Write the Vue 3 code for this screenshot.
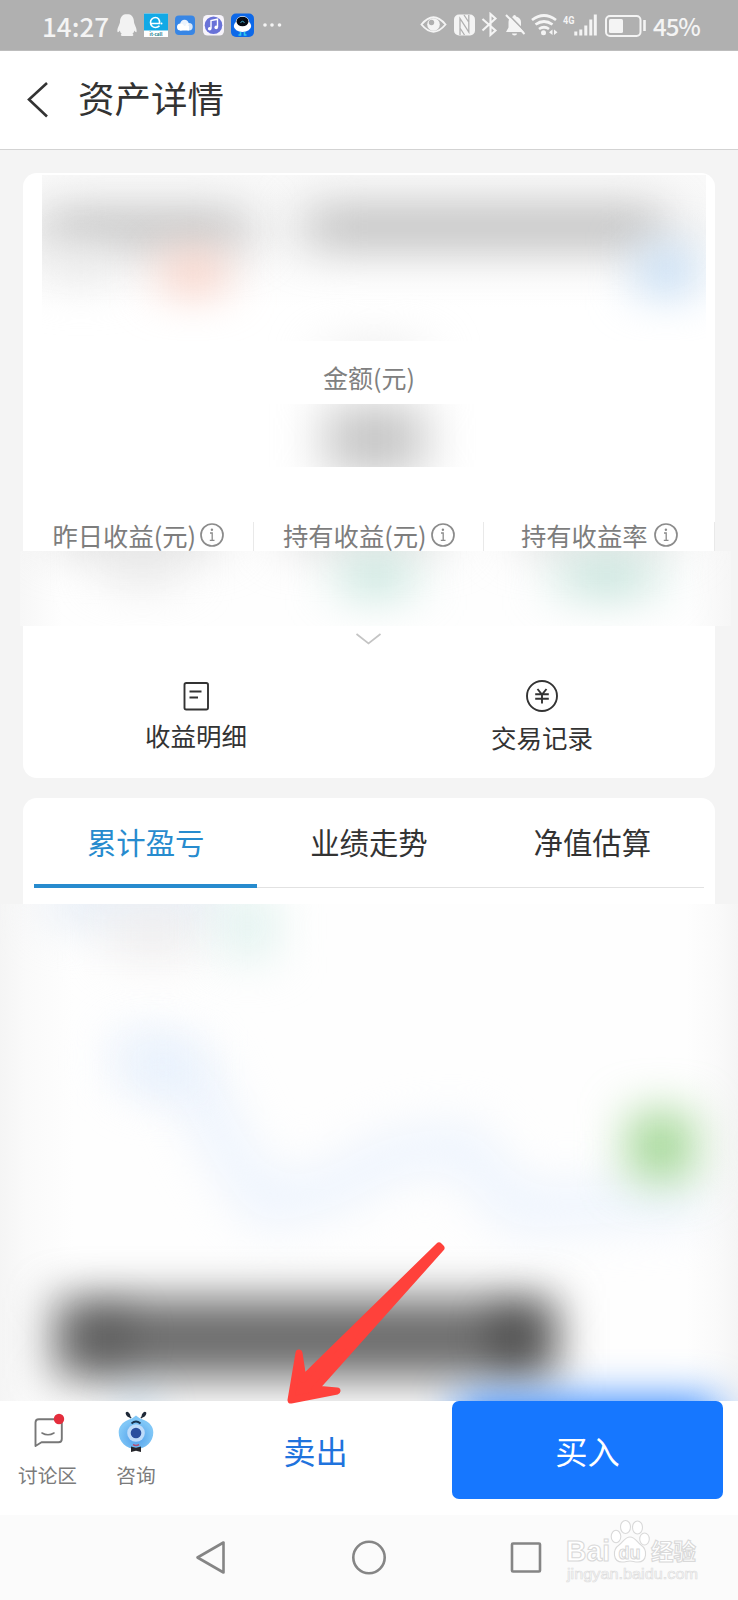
<script setup>
const stats = [
  { label: '昨日收益(元)', cls: 's1' },
  { label: '持有收益(元)', cls: 's2' },
  { label: '持有收益率', cls: 's3' },
]
const tabs = ['累计盈亏', '业绩走势', '净值估算']
</script>

<template>
  <div class="phone">
    <header class="status">
      <span class="time">14:27</span>
      <svg class="apps" width="168" height="26" viewBox="116 12 168 26">
        <path d="M127 14c-4.500 0-7 3.500-7 8 0 2-3 6-2.600 9.500.2 1.200 1.400.6 2.400-1 .4 1.500 1 2.500 2 3.300-1.200.5-1.600 2 .2 2.200h10.400c1.500-.2 1.200-1.700 0-2.200 1-.8 1.600-1.800 2-3.300 1 1.600 2 2.200 2.200 1 .4-3.500-2.600-7.500-2.600-9.500 0-4.500-2.500-8-7-8z" fill="#f2f2f2" />
        <rect x="144" y="13.500" width="24" height="23.500" fill="#fff" />
        <rect x="144" y="13.500" width="24" height="17" fill="#12a9e6" />
        <path d="M151 23.500h8.500c.5-4-1.500-6-4-6-3 0-5 2.500-5 5s2 5 5 5c1.500 0 3-.6 4-1.700" fill="none" stroke="#fff" stroke-width="1.600" />
        <circle cx="161.500" cy="23.500" r="1" fill="#fff" />
        <text x="149.500" y="35.500" font-size="5" font-weight="700" textLength="13" lengthAdjust="spacingAndGlyphs" fill="#18808e">it-call</text>
        <rect x="175" y="15.500" width="20" height="19.500" rx="4" fill="#3886e5" />
        <g fill="#fff"><circle cx="180.500" cy="27" r="3.500" /><circle cx="184.500" cy="24" r="4.300" opacity=".9" /><circle cx="189" cy="26.700" r="3.700" opacity=".8" /><rect x="180" y="26" width="9" height="4.500" /></g>
        <rect x="203" y="15" width="21" height="20.500" rx="4.500" fill="#f7f4fb" />
        <circle cx="213.500" cy="25.200" r="8.800" fill="#6972d8" />
        <path d="M211 28.500v-8l6.500-1.300v8" fill="none" stroke="#fff" stroke-width="1.400" />
        <circle cx="209.700" cy="28.700" r="1.800" fill="#fff" /><circle cx="216.200" cy="27.400" r="1.800" fill="#fff" />
        <rect x="231" y="13.500" width="23" height="23.500" rx="5" fill="#0d68e8" />
        <ellipse cx="242.500" cy="26" rx="8.700" ry="6" fill="#fff" /><circle cx="242.500" cy="23" r="7" fill="#fff" />
        <ellipse cx="242.500" cy="21.500" rx="6" ry="4.800" fill="#050b15" />
        <path d="M240.500 22.500q2-2.500 4 0" fill="none" stroke="#4bd" stroke-width="1" />
        <path d="M240.500 32v3h-2M244.500 32v3h2" fill="none" stroke="#31cce8" stroke-width="1.600" />
        <g fill="#f4f4f4"><circle cx="265" cy="25" r="1.800" /><circle cx="272" cy="25" r="1.800" /><circle cx="279.500" cy="25" r="1.800" /></g>
      </svg>
      <svg class="signals" width="228" height="26" viewBox="419 12 228 26" fill="none" stroke="#f4f4f4">
        <path d="M421.500 24.500q12-14.500 24 0q-12 14.500-24 0z" stroke-width="1.900" />
        <circle cx="433.500" cy="24.500" r="6.300" fill="#f4f4f4" stroke="none" />
        <circle cx="431.500" cy="22.500" r="2.700" fill="#b0b0b0" stroke="none" />
        <rect x="454" y="14.500" width="21" height="21" rx="5" fill="#f4f4f4" stroke="none" />
        <path d="M460 35V18.500l8.800 13.500V15M464 15l5 7.500M460 28l4.500 7" stroke="#b0b0b0" stroke-width="1.300" />
        <path d="M482.500 19l13 11.500-5 4.500V14l5 4.500-13 12" stroke-width="2.100" />
        <path d="M506 32h18l-3-4v-6c0-3-2-5-5-5.600a1.500 1.500 0 00-3 0c-3 .6-4.500 3-4.500 6v5z" fill="#f4f4f4" stroke="none" />
        <path d="M512 33.500h5a2.500 2 0 01-5 0z" fill="#f4f4f4" stroke="none" />
        <path d="M508 14l18 18.500" stroke="#b0b0b0" stroke-width="1.600" /><path d="M506 15l18.500 19" stroke-width="2" />
        <path d="M532 20q12-9 24 0M535.500 24.500q8.500-6 17 0M539 29q5-3.500 10 0" stroke-width="2.700" />
        <circle cx="543.500" cy="32.800" r="2.500" fill="#f4f4f4" stroke="none" />
        <path d="M552.500 29.500v5.500l-3.500-2.700zM554 29.500v5.500l3.500-2.700z" fill="#f4f4f4" stroke="none" />
        <text class="net" x="563" y="23.500" textLength="11.500" lengthAdjust="spacingAndGlyphs" fill="#f4f4f4" stroke="none">4G</text>
        <path d="M575.800 35.500v-4M580.800 35.500v-6M585.800 35.500v-10M590.800 35.500v-16M595.300 35.500v-21" stroke-width="3" />
        <rect x="606" y="16" width="34.500" height="20" rx="4" stroke-width="2" />
        <rect x="609" y="19" width="14" height="14" rx="1.500" fill="#f4f4f4" stroke="none" /><path d="M644.500 20v11" stroke-width="2.600" />
      </svg>
      <span class="percent">45%</span>
    </header>

    <nav class="title-bar">
      <svg width="22" height="38" viewBox="0 0 22 38"><path d="M20 2L2 18.500L20 35.500" fill="none" stroke="#333" stroke-width="2.600" /></svg>
      <h1>资产详情</h1>
    </nav>

    <main>
      <section class="card summary">
        <svg class="fund-mask" width="664" height="166" viewBox="42 175 664 166">
          <defs>
            <filter id="b18" x="-60%" y="-200%" width="220%" height="500%" color-interpolation-filters="sRGB"><feGaussianBlur stdDeviation="25 21" /></filter>
            <filter id="b14" x="-150%" y="-250%" width="400%" height="600%" color-interpolation-filters="sRGB"><feGaussianBlur stdDeviation="24 22" /></filter>
            <linearGradient id="fade" x1="0" y1="0" x2="0" y2="1"><stop offset="0" stop-color="#f9f9f9" /><stop offset=".35" stop-color="#f7f7f7" /><stop offset=".8" stop-color="#fff" /></linearGradient>
          </defs>
          <rect x="42" y="175" width="664" height="166" fill="url(#fade)" />
          <rect x="46" y="208" width="200" height="42" fill="#c6c6c6" filter="url(#b18)" />
          <rect x="308" y="204" width="354" height="46" fill="#c4c4c4" filter="url(#b18)" />
          <rect x="46" y="250" width="70" height="34" fill="#ececec" filter="url(#b14)" />
          <rect x="162" y="252" width="62" height="42" fill="#f9cfc3" filter="url(#b14)" />
          <rect x="638" y="246" width="56" height="50" fill="#c3dcf4" filter="url(#b14)" />
          <ellipse cx="374" cy="354" rx="60" ry="10" fill="#e2e2e2" filter="url(#b14)" />
        </svg>
        <div class="amount-label">金额(元)</div>
        <svg class="amount-mask" width="208" height="63" viewBox="268 404 208 63">
          <rect x="326" y="404" width="98" height="70" fill="#c6c6c6" filter="url(#b14)" />
        </svg>
        <div class="stats">
          <div v-for="s in stats" :key="s.label" class="stat" :class="s.cls">
            <span>{{ s.label }}</span>
            <svg width="24" height="24" viewBox="0 0 24 24" fill="none" stroke="#8b8b8b"><circle cx="12" cy="12" r="11" stroke-width="1.700" /><path d="M10 10h2.200v7M9.800 17.300h4.700" stroke-width="1.300" /><circle cx="11.900" cy="6.800" r="1.200" fill="#8b8b8b" stroke="none" /></svg>
          </div>
        </div>
        <svg class="stats-mask" width="711" height="75" viewBox="20 551 711 75">
          <defs>
            <linearGradient id="side" x1="0" x2="1"><stop offset="0" stop-color="#f7f7f7" /><stop offset=".06" stop-color="#fefefe" /><stop offset=".94" stop-color="#fefefe" /><stop offset="1" stop-color="#f6f6f6" /></linearGradient>
            <filter id="wide" x="-150%" y="-250%" width="400%" height="600%" color-interpolation-filters="sRGB"><feGaussianBlur stdDeviation="27 22" /></filter>
          </defs>
          <rect x="20" y="551" width="711" height="75" fill="url(#side)" />
          <rect x="55" y="520" width="165" height="32" fill="#d8d8d8" filter="url(#wide)" />
          <rect x="285" y="520" width="160" height="30" fill="#d8d8d8" filter="url(#wide)" />
          <rect x="520" y="520" width="155" height="30" fill="#d8d8d8" filter="url(#wide)" />
          <rect x="110" y="555" width="65" height="28" fill="#e2e2e2" filter="url(#wide)" />
          <rect x="345" y="556" width="62" height="40" fill="#bde2d8" filter="url(#wide)" />
          <rect x="562" y="556" width="90" height="40" fill="#c1e2d9" filter="url(#wide)" />
        </svg>
        <svg class="more" width="27" height="14" viewBox="0 0 27 14"><path d="M1.500 2L13.500 11.500L25.500 2" fill="none" stroke="#c4c4c4" stroke-width="1.700" /></svg>
        <div class="links">
          <div class="link">
            <svg width="36" height="36" viewBox="0 0 36 36" fill="none" stroke="#333" stroke-width="1.900"><rect x="6.500" y="5" width="23.500" height="26.500" rx="1.800" /><path d="M11.500 13.500h12M11.500 19.500h8.500" /></svg>
            <span>收益明细</span>
          </div>
          <div class="link record">
            <svg width="36" height="36" viewBox="0 0 36 36" fill="none" stroke="#333" stroke-width="1.900"><circle cx="18" cy="18" r="15" /><path d="M13.500 11l4.500 5.500L22.500 11M18 16v9.500M11.200 16.200h13.600M11.200 20.800h13.600" /></svg>
            <span>交易记录</span>
          </div>
        </div>
      </section>

      <section class="card chart-card">
        <div class="tabs">
          <div v-for="(t, i) in tabs" :key="t" class="tab" :class="{ active: i === 0 }">{{ t }}</div>
        </div>
      </section>
      <svg class="chart" width="738" height="497" viewBox="0 904 738 497">
        <defs>
          <linearGradient id="edge" x1="0" x2="1"><stop offset="0" stop-color="#f5f5f5" /><stop offset=".035" stop-color="#fafafa" /><stop offset=".1" stop-color="#fefefe" /><stop offset=".93" stop-color="#fefefe" /><stop offset=".97" stop-color="#fafafa" /><stop offset="1" stop-color="#f5f5f5" /></linearGradient>
          <filter id="soft" filterUnits="userSpaceOnUse" x="-100" y="800" width="940" height="720" color-interpolation-filters="sRGB"><feGaussianBlur stdDeviation="24" /></filter>
          <filter id="tight" filterUnits="userSpaceOnUse" x="-100" y="800" width="940" height="720" color-interpolation-filters="sRGB"><feGaussianBlur stdDeviation="22" /></filter>
        </defs>
        <rect x="0" y="904" width="738" height="497" fill="url(#edge)" />
        <rect x="50" y="880" width="170" height="42" fill="#e2eaf4" filter="url(#soft)" />
        <rect x="110" y="915" width="85" height="40" fill="#eeecec" filter="url(#soft)" />
        <rect x="222" y="895" width="52" height="62" fill="#def1ed" filter="url(#soft)" />
        <path d="M115 1050L190 1070L225 1145L265 1205L330 1190L390 1155L465 1145L515 1210L640 1202L700 1200" fill="none" stroke="#ecf3fd" stroke-width="42" stroke-linejoin="round" filter="url(#soft)" />
        <rect x="130" y="1045" width="65" height="45" fill="#e6f0fc" filter="url(#soft)" />
        <rect x="630" y="1114" width="62" height="64" fill="#97d288" filter="url(#soft)" />
        <rect x="54" y="1298" width="504" height="80" fill="#6c6c6c" filter="url(#tight)" />
        <ellipse cx="108" cy="1336" rx="22" ry="28" fill="#444" opacity=".55" filter="url(#tight)" />
        <ellipse cx="514" cy="1336" rx="22" ry="30" fill="#333" opacity=".7" filter="url(#tight)" />
        <ellipse cx="138" cy="1410" rx="16" ry="16" fill="#67a7dd" opacity=".5" filter="url(#tight)" />
        <rect x="458" y="1401" width="260" height="70" fill="#1677ff" filter="url(#tight)" />
      </svg>
    </main>

    <footer class="actions">
      <div class="tool discuss">
        <svg width="36" height="44" viewBox="29.500 1409 36 44"><path d="M35 1446V1422.500q0-3.300 3.300-3.300H58q3.300 0 3.300 3.300V1439q0 3.300-3.300 3.300H41z" fill="none" stroke="#777" stroke-width="1.900" stroke-linejoin="round" /><path d="M41.500 1433q6 3.500 12 0" fill="none" stroke="#777" stroke-width="1.600" stroke-linecap="round" /><circle cx="58.500" cy="1419" r="5.200" fill="#e42d3c" /></svg>
        <span>讨论区</span>
      </div>
      <div class="tool consult">
        <svg width="40" height="44" viewBox="116 1409 40 44">
          <defs><radialGradient id="bot" cx=".5" cy=".65"><stop offset="0" stop-color="#4f9de9" /><stop offset="1" stop-color="#80c7f7" /></radialGradient></defs>
          <path d="M131 1418l-4-4M141 1418l4-4" stroke="#1f2938" stroke-width="1.600" />
          <ellipse cx="128" cy="1414.500" rx="1.800" ry="2.900" transform="rotate(-35 128 1414.500)" fill="#1f2938" /><ellipse cx="144" cy="1414.500" rx="1.800" ry="2.900" transform="rotate(35 144 1414.500)" fill="#1f2938" />
          <path d="M136 1415.500q3 3 8 4.500c6 2.500 9.300 7 9.300 12.500 0 9-7.500 16.500-17.300 16.500s-17.300-7.500-17.300-16.500c0-5.500 3.300-10 9.300-12.500q5-1.500 8-4.500z" fill="url(#bot)" />
          <path d="M131.500 1423.500q4.500-4 9 0" fill="none" stroke="#193451" stroke-width="1.800" />
          <circle cx="136" cy="1433" r="8.800" fill="#bedbfa" /><circle cx="136" cy="1433" r="5.300" fill="#294e9e" />
          <path d="M133 1444.500q3 2 6 0" stroke="#b64f73" stroke-width="1.600" fill="none" />
          <path d="M131 1446.500l5 1.300 5-1.300v5.500l-5-1.300-5 1.300z" fill="#25262b" />
        </svg>
        <span>咨询</span>
      </div>
      <div class="sell">卖出</div>
      <div class="buy">买入</div>
    </footer>

    <div class="system-nav">
      <svg width="738" height="85" viewBox="0 1515 738 85" fill="none">
        <g stroke="#858585" stroke-width="2.600" stroke-linejoin="round"><path d="M197.500 1557.500L223.500 1542.500V1572.500Z" /><circle cx="369" cy="1557.500" r="15.700" /><rect x="512" y="1543.500" width="28" height="28" rx="1" /></g>
        <g stroke="#d9d9d9" stroke-width="1.100" fill="#fff">
          <text class="mark" x="566" y="1561" textLength="44" lengthAdjust="spacingAndGlyphs">Bai</text>
          <path d="M630 1537c-5 0-7 5-11 8-7 5-6 17 3 17 4 0 5-1 8-1s4 1 8 1c9 0 10-12 3-17-4-3-6-8-11-8z" />
          <ellipse cx="616" cy="1536.500" rx="4.800" ry="6.300" /><ellipse cx="625.500" cy="1527" rx="5" ry="6.500" /><ellipse cx="637.500" cy="1527.500" rx="5" ry="6.500" /><ellipse cx="644.500" cy="1539" rx="4.800" ry="6" />
          <text class="du" x="618.500" y="1558.500" textLength="22" lengthAdjust="spacingAndGlyphs">du</text>
          <text class="jy" x="651" y="1559.500" textLength="45" lengthAdjust="spacingAndGlyphs">经验</text>
        </g>
        <text class="url" x="567" y="1578.500" textLength="131" lengthAdjust="spacingAndGlyphs">jingyan.baidu.com</text>
      </svg>
    </div>

    <svg class="arrow" width="170" height="174" viewBox="280 1236 170 174"><path d="M291 1400L299 1353L303 1379L439 1246L441 1248L315 1389L337 1391Z" fill="#ff413b" stroke="#ff413b" stroke-width="7" stroke-linejoin="round" /></svg>
  </div>
</template>

<style>
body { background: #f4f4f4; }
</style>

<style scoped>
.phone { position: relative; width: 738px; height: 1600px; overflow: hidden; background: #f4f4f4; font-family: "Noto Sans CJK SC", "Noto Sans", sans-serif; color: #333; }
.phone * { box-sizing: border-box; }
svg { display: block; flex: none; }
span { white-space: nowrap; }
.status { display: flex; align-items: center; height: 51px; padding-left: 42px; background: #b0b0b0; border-bottom: 1px solid #bdbdbd; color: #f4f4f4; }
.time { width: 74px; padding-top: 1px; font-size: 26px; font-weight: 500; line-height: 50px; }
.signals { margin-left: 135px; }
.net { font: 700 11px "Roboto", sans-serif; }
.percent { margin-left: 6px; padding-top: 2px; font-size: 24px; font-weight: 500; letter-spacing: -1px; line-height: 48px; }
.title-bar { display: flex; align-items: center; height: 99px; padding: 0 0 0 27px; background: #fff; border-bottom: 1px solid #d3d3d3; }
.title-bar h1 { margin: 0 0 0 29px; font-size: 36.500px; font-weight: 400; line-height: 94px; padding-bottom: 4px; }
main { padding-top: 23px; }
.card { width: 692px; margin-left: 23px; background: #fff; }
.summary { height: 605px; border-radius: 14px; display: flex; flex-direction: column; }
.fund-mask { margin: 2px 0 0 19px; }
.amount-label { height: 63px; padding-top: 17px; font-size: 25px; line-height: 38px; text-align: center; color: #808080; }
.amount-mask { margin-left: 245px; }
.stats { display: flex; height: 29px; margin-top: 55px; }
.stat { display: flex; align-items: flex-start; gap: 5px; height: 29px; border-right: 1px solid #e9e9e9; font-size: 25.300px; line-height: 27px; color: #7d7d7d; }
.stat svg { margin-top: 1px; }
.s1 { width: 231px; padding-left: 29.500px; gap: 4px; }
.s2 { width: 230px; padding-left: 29px; gap: 4px; }
.s3 { width: 231px; padding-left: 37px; gap: 6px; }
.stats-mask { margin-left: -3px; }
.more { margin: 6px 0 0 332px; }
.links { display: flex; justify-content: space-between; padding: 32px 108px 0 108px; }
.link { width: 130px; display: flex; flex-direction: column; align-items: center; font-size: 25.500px; line-height: 38px; }
.link span { margin-top: 2px; }
.link.record span { margin-top: 4px; }
.chart-card { height: 106px; margin-top: 20px; padding: 0 11px; border-radius: 14px 14px 0 0; }
.tabs { display: flex; height: 90px; border-bottom: 1px solid #e2e2e2; }
.tab { flex: 1; height: 90px; text-align: center; font-size: 29.400px; line-height: 87px; color: #333; }
.active { color: #278bce; border-bottom: 4.500px solid #278bce; }
.actions { display: flex; height: 114px; background: #fff; }
.tool { display: flex; flex-direction: column; align-items: center; padding-top: 8px; font-size: 19.700px; line-height: 30px; color: #7b7b7b; }
.tool span { margin-top: 7px; }
.discuss { width: 60px; margin-left: 17.500px; }
.consult { width: 60px; margin-left: 28.500px; }
.sell { width: 286px; padding-left: 13px; text-align: center; font-size: 32.300px; line-height: 98px; color: #1f73dd; }
.buy { width: 271px; height: 98px; border-radius: 7px; background: #1677ff; color: #fff; text-align: center; font-size: 32.300px; line-height: 98px; }
.system-nav { height: 85px; background: #fbfbfb; }
.mark { font: 700 30px "Liberation Sans", sans-serif; }
.du { font: 700 19px "Liberation Sans", sans-serif; }
.jy { font: 700 23px "Noto Sans CJK SC", sans-serif; }
.url { font: 400 15px "Liberation Sans", sans-serif; fill: #fff; stroke: #dedede; stroke-width: .7px; }
.arrow { position: absolute; left: 280px; top: 1236px; }
</style>
